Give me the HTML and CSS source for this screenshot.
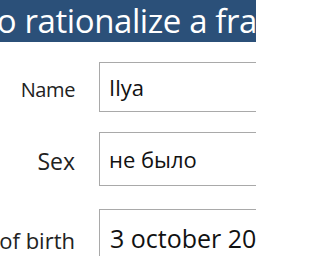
FILE: index.html
```html
<!DOCTYPE html>
<html>
<head>
<meta charset="utf-8">
<link rel="stylesheet" href="styles.css">
</head>
<body>
<div class="title"><h1>To rationalize a fraction</h1></div>
<form class="form">
  <div class="row row-name"><label class="label">Name</label><div class="field">Ilya</div></div>
  <div class="row row-sex"><label class="label">Sex</label><div class="field">не было</div></div>
  <div class="row row-birth"><label class="label">Date of birth</label><div class="field">3 october 2000</div></div>
</form>
</body>
</html>
```
FILE: styles.css
```css
html, body {
  margin: 0;
  padding: 0;
  background: #ffffff;
  width: 256px;
  height: 256px;
  overflow: hidden;
}
body {
  font-family: "Open Sans", "Noto Sans", sans-serif;
  color: #1a1a1a;
}
.title {
  background: #2b5079;
  width: 256px;
  height: 42px;
  overflow: hidden;
}
.title h1 {
  margin: 0;
  font-size: 33px;
  font-weight: 400;
  line-height: 42px;
  color: #ffffff;
  white-space: nowrap;
  letter-spacing: -0.4px;
  text-indent: -21px;
}
.form {
  display: flex;
  flex-direction: column;
  padding-top: 20px;
  width: 256px;
  overflow: hidden;
}
.row {
  display: grid;
  grid-template-columns: 75px 170px;
  column-gap: 24px;
  align-items: center;
}
.label {
  display: flex;
  justify-content: flex-end;
  white-space: nowrap;
  color: #222222;
}
.field {
  box-sizing: border-box;
  border: 1.5px solid #a9a9a9;
  display: flex;
  align-items: center;
  padding-left: 9px;
  white-space: nowrap;
  overflow: hidden;
  color: #111111;
}
.row-name .label { font-size: 20px; letter-spacing: -0.4px; padding-top: 5px; }
.row-name .field { height: 50px; font-size: 22px; }
.row-sex { margin-top: 20px; }
.row-sex .label { font-size: 23px; padding-top: 4px; }
.row-sex .field { height: 54px; font-size: 22px; }
.row-birth { margin-top: 23px; }
.row-birth .label { font-size: 22px; padding-top: 4px; }
.row-birth .field { height: 58px; font-size: 25px; padding-left: 10px; }
```
